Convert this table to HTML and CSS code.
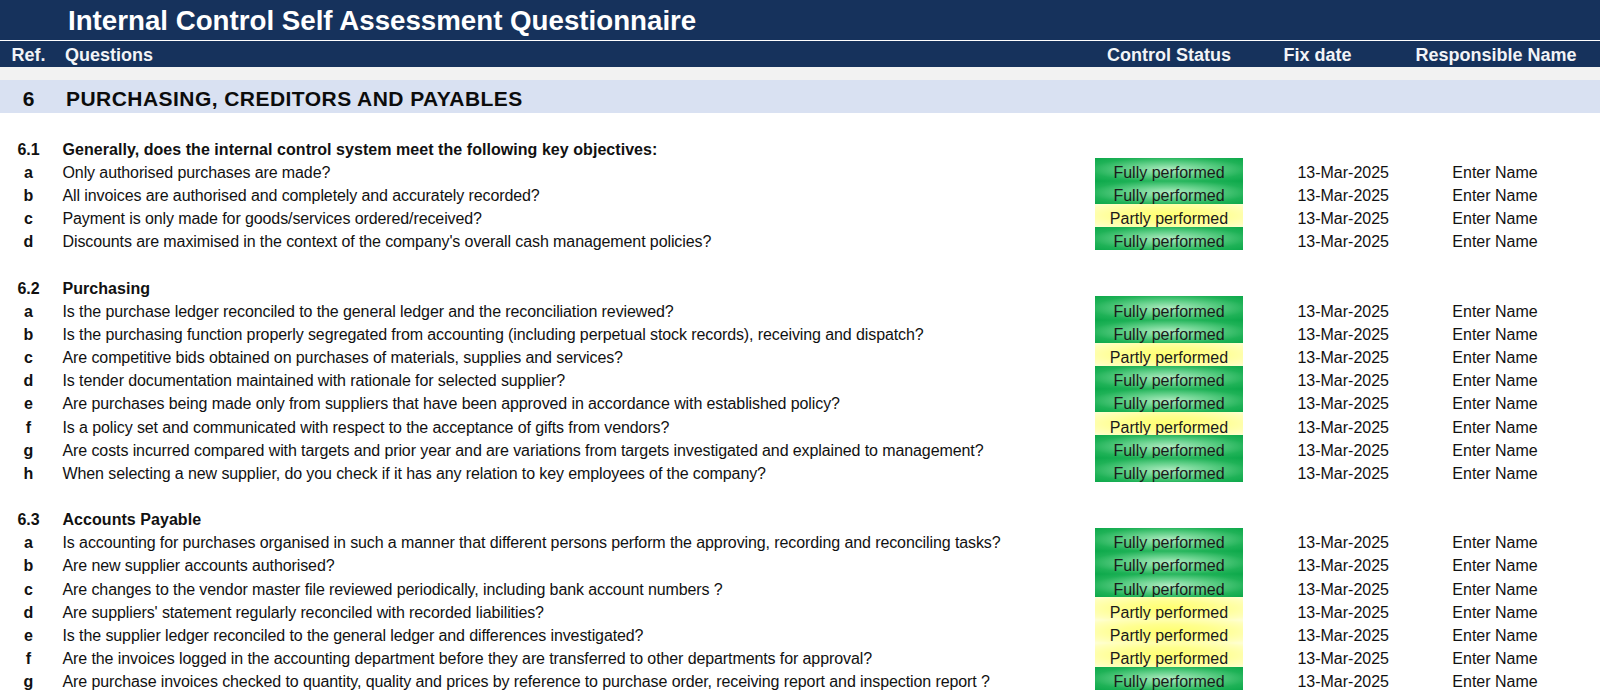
FILE: index.html
```html
<!DOCTYPE html>
<html>
<head>
<meta charset="utf-8">
<title>Internal Control Self Assessment Questionnaire</title>
<link rel="stylesheet" href="styles.css">
</head>
<body>
<div class="sheet">
  <div class="title">Internal Control Self Assessment Questionnaire</div>
  <div class="colhead">
    <div class="c-ref">Ref.</div>
    <div class="c-q">Questions</div>
    <div class="c-status">Control Status</div>
    <div class="c-date">Fix date</div>
    <div class="c-name">Responsible Name</div>
  </div>
  <div class="band-gray"></div>
  <div class="section">
    <div class="c-ref">6</div>
    <div class="c-q">PURCHASING, CREDITORS AND PAYABLES</div>
  </div>
  <div class="spacer"></div>

  <div class="row sub"><div class="c-ref">6.1</div><div class="c-q">Generally, does the internal control system meet the following key objectives:</div></div>
  <div class="row"><div class="c-ref">a</div><div class="c-q">Only authorised purchases are made?</div><div class="c-status full">Fully performed</div><div class="c-date">13-Mar-2025</div><div class="c-name">Enter Name</div></div>
  <div class="row"><div class="c-ref">b</div><div class="c-q">All invoices are authorised and completely and accurately recorded?</div><div class="c-status full">Fully performed</div><div class="c-date">13-Mar-2025</div><div class="c-name">Enter Name</div></div>
  <div class="row"><div class="c-ref">c</div><div class="c-q">Payment is only made for goods/services ordered/received?</div><div class="c-status part">Partly performed</div><div class="c-date">13-Mar-2025</div><div class="c-name">Enter Name</div></div>
  <div class="row"><div class="c-ref">d</div><div class="c-q">Discounts are maximised in the context of the company's overall cash management policies?</div><div class="c-status full">Fully performed</div><div class="c-date">13-Mar-2025</div><div class="c-name">Enter Name</div></div>
  <div class="row"></div>

  <div class="row sub"><div class="c-ref">6.2</div><div class="c-q">Purchasing</div></div>
  <div class="row"><div class="c-ref">a</div><div class="c-q">Is the purchase ledger reconciled to the general ledger and the reconciliation reviewed?</div><div class="c-status full">Fully performed</div><div class="c-date">13-Mar-2025</div><div class="c-name">Enter Name</div></div>
  <div class="row"><div class="c-ref">b</div><div class="c-q">Is the purchasing function properly segregated from accounting (including perpetual stock records), receiving and dispatch?</div><div class="c-status full">Fully performed</div><div class="c-date">13-Mar-2025</div><div class="c-name">Enter Name</div></div>
  <div class="row"><div class="c-ref">c</div><div class="c-q">Are competitive bids obtained on purchases of materials, supplies and services?</div><div class="c-status part">Partly performed</div><div class="c-date">13-Mar-2025</div><div class="c-name">Enter Name</div></div>
  <div class="row"><div class="c-ref">d</div><div class="c-q">Is tender documentation maintained with rationale for selected supplier?</div><div class="c-status full">Fully performed</div><div class="c-date">13-Mar-2025</div><div class="c-name">Enter Name</div></div>
  <div class="row"><div class="c-ref">e</div><div class="c-q">Are purchases being made only from suppliers that have been approved in accordance with established policy?</div><div class="c-status full">Fully performed</div><div class="c-date">13-Mar-2025</div><div class="c-name">Enter Name</div></div>
  <div class="row"><div class="c-ref">f</div><div class="c-q">Is a policy set and communicated with respect to the acceptance of gifts from vendors?</div><div class="c-status part">Partly performed</div><div class="c-date">13-Mar-2025</div><div class="c-name">Enter Name</div></div>
  <div class="row"><div class="c-ref">g</div><div class="c-q">Are costs incurred compared with targets and prior year and are variations from targets investigated and explained to management?</div><div class="c-status full">Fully performed</div><div class="c-date">13-Mar-2025</div><div class="c-name">Enter Name</div></div>
  <div class="row"><div class="c-ref">h</div><div class="c-q">When selecting a new supplier, do you check if it has any relation to key employees of the company?</div><div class="c-status full">Fully performed</div><div class="c-date">13-Mar-2025</div><div class="c-name">Enter Name</div></div>
  <div class="row"></div>

  <div class="row sub"><div class="c-ref">6.3</div><div class="c-q">Accounts Payable</div></div>
  <div class="row"><div class="c-ref">a</div><div class="c-q">Is accounting for purchases organised in such a manner that different persons perform the approving, recording and reconciling tasks?</div><div class="c-status full">Fully performed</div><div class="c-date">13-Mar-2025</div><div class="c-name">Enter Name</div></div>
  <div class="row"><div class="c-ref">b</div><div class="c-q">Are new supplier accounts authorised?</div><div class="c-status full">Fully performed</div><div class="c-date">13-Mar-2025</div><div class="c-name">Enter Name</div></div>
  <div class="row"><div class="c-ref">c</div><div class="c-q">Are changes to the vendor master file reviewed periodically, including bank account numbers ?</div><div class="c-status full">Fully performed</div><div class="c-date">13-Mar-2025</div><div class="c-name">Enter Name</div></div>
  <div class="row"><div class="c-ref">d</div><div class="c-q">Are suppliers' statement regularly reconciled with recorded liabilities?</div><div class="c-status part">Partly performed</div><div class="c-date">13-Mar-2025</div><div class="c-name">Enter Name</div></div>
  <div class="row"><div class="c-ref">e</div><div class="c-q">Is the supplier ledger reconciled to the general ledger and differences investigated?</div><div class="c-status part">Partly performed</div><div class="c-date">13-Mar-2025</div><div class="c-name">Enter Name</div></div>
  <div class="row"><div class="c-ref">f</div><div class="c-q">Are the invoices logged in the accounting department before they are transferred to other departments for approval?</div><div class="c-status part">Partly performed</div><div class="c-date">13-Mar-2025</div><div class="c-name">Enter Name</div></div>
  <div class="row"><div class="c-ref">g</div><div class="c-q">Are purchase invoices checked to quantity, quality and prices by reference to purchase order, receiving report and inspection report ?</div><div class="c-status full">Fully performed</div><div class="c-date">13-Mar-2025</div><div class="c-name">Enter Name</div></div>
</div>
</body>
</html>
```

FILE: styles.css
```css
html, body {
  margin: 0;
  padding: 0;
  background: #ffffff;
}

.sheet {
  width: 1600px;
  font-family: "Liberation Sans", Arial, sans-serif;
  color: #111111;
  overflow: hidden;
}

.title {
  height: 40px;
  box-sizing: border-box;
  padding: 2px 0 0 68px;
  line-height: 38px;
  background: #16325c;
  color: #ffffff;
  font-size: 27.7px;
  font-weight: bold;
  white-space: nowrap;
}

.colhead,
.section,
.row {
  display: grid;
  grid-template-columns: 57px 1038px 148px 149px 208px;
}

.colhead {
  margin-top: 1px;
  height: 26px;
  background: #16325c;
  color: #f2f4f7;
  font-size: 18px;
  font-weight: bold;
  line-height: 26px;
  box-sizing: border-box;
  padding-top: 1px;
}

.colhead .c-ref { text-align: center; }
.colhead .c-q { padding-left: 8px; }
.colhead .c-status,
.colhead .c-date,
.colhead .c-name { text-align: center; white-space: nowrap; }

.band-gray {
  height: 13px;
  background: #f2f2f2;
}

.section {
  height: 33px;
  box-sizing: border-box;
  padding-top: 3.5px;
  line-height: 30px;
  background: #d9e1f2;
  font-size: 21px;
  font-weight: bold;
  color: #0c0c0c;
}

.section .c-ref { text-align: center; }
.section .c-q { padding-left: 9px; letter-spacing: 0.45px; }

.spacer {
  height: 21.4px;
}

.row {
  height: 23.15px;
  font-size: 16px;
}

.row > div {
  height: 23.15px;
  box-sizing: border-box;
  padding-top: 5.5px;
  line-height: 19px;
  white-space: nowrap;
}

.row .c-ref {
  text-align: center;
  font-weight: bold;
}

.row .c-q {
  padding-left: 5.5px;
  letter-spacing: -0.1px;
}

.row.sub .c-q {
  font-weight: bold;
  letter-spacing: 0.05px;
}

.row .c-status {
  text-align: center;
  color: #1a1a1a;
}

.row .c-status.full {
  background: radial-gradient(ellipse at center, #b0ecc2 0%, #62d089 40%, #1fb257 75%, #0ca84a 100%);
}

.row .c-status.part {
  background: radial-gradient(ellipse at center, #ffff70 0%, #ffff8e 45%, #ffffbc 85%, #ffffd6 100%);
}

.row .c-date {
  text-align: right;
  padding-right: 3px;
}

.row .c-name {
  text-align: center;
  padding-right: 2px;
}
```
